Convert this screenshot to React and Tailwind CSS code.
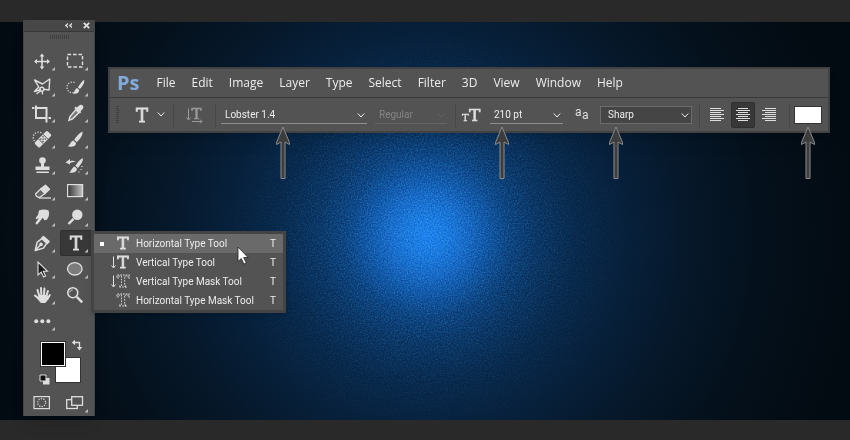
import { useState } from 'react'

const ink = '#dedede'
const slab = { fontFamily: '"DejaVu Serif", serif' }

const Corner = () => <path d="M28 19v3.4h-3.4z" fill="#bdbdbd" />

const icons = {
  move: (
    <g stroke={ink} strokeWidth="1.6" fill={ink}>
      <path d="M15 7.5v12M9 13.5h12" />
      <path d="M15 5.5l2.4 3h-4.8zM15 21.5l2.4-3h-4.8zM7 13.5l3-2.4v4.8zM23 13.5l-3-2.4v4.8z" stroke="none" />
    </g>
  ),
  marquee: <rect x="7.5" y="6.5" width="15" height="12.5" fill="none" stroke={ink} strokeWidth="1.4" strokeDasharray="3.6 1.9" />,
  lasso: (
    <g fill="none" stroke={ink} strokeWidth="1.4" strokeLinejoin="round">
      <path d="M14 15.5L7.5 17.5l4.3-4.5L7.5 6l8 4 7.2-5-.6 11-5.5-.8" />
      <circle cx="14.8" cy="15.2" r="1.9" />
      <path d="M13.5 16.8L9.5 20M15 17l.6 3.4" />
    </g>
  ),
  quickSelect: (
    <g fill={ink}>
      <path d="M14.5 8.6a5.3 5.3 0 1 0 0 9.6" fill="none" stroke={ink} strokeWidth="1.3" strokeDasharray="1.2 1.5" />
      <path d="M24.2 5.8c.6 3.5-1.8 6.6-4.3 9.2l-2-1.8c1.8-2.6 3.8-5.6 6.3-7.4zM17.2 14l2 2c-.2 3.2-3.2 4.4-6.2 3.6 1.6-1 1.4-4.4 4.2-5.6z" />
    </g>
  ),
  crop: (
    <g fill="none" stroke={ink} strokeWidth="2">
      <path d="M5 8h2.5M9 5.5V18h9.5M9.5 8h10v14.5M21.5 18h2.5" />
    </g>
  ),
  eyedropper: (
    <g>
      <path d="M19.2 5.6c1-1 2.6-1 3.5 0s.9 2.4 0 3.4l-2.2 2.2.9.9-1.5 1.5-5.6-5.6 1.5-1.5.9.9z" fill={ink} />
      <path d="M16 9.6l3 3-6.4 6.3-3.6 1.4 1-3.8z" fill="#777" stroke={ink} strokeWidth="1.5" />
    </g>
  ),
  healing: (
    <g>
      <path d="M7.5 15a5 5 0 1 1 8-7" fill="none" stroke={ink} strokeWidth="1.3" strokeDasharray="1.2 1.5" />
      <rect x="7" y="9.7" width="18" height="7" rx="1.5" fill={ink} transform="rotate(-45 16 13.2)" />
      <path d="M11.3 12.8l5 5M16 8.3l5 5" stroke="#555" strokeWidth="1" />
      <path d="M16 10.7v.1M13.8 13v.1M18.2 13v.1M16 15.3v.1M16 13v.1" stroke="#555" strokeWidth="1.6" strokeLinecap="round" />
    </g>
  ),
  brush: (
    <path
      d="M22.4 5.6c.8 3.8-2.6 7.6-5.6 10.6l-2.6-2.4c2.4-3.4 4.8-6.6 8.2-8.2zM13.4 14.4l2.6 2.5c0 3.8-4.6 4.4-8.6 3.4 2.6-.8 2.6-4.6 6-5.9z"
      fill={ink}
    />
  ),
  stamp: (
    <g fill={ink}>
      <circle cx="15.5" cy="8.6" r="3.3" />
      <path d="M14 10.5h3v4h5.5v3.6h-14v-3.6H14zM9.5 19.6h12.4v1.5H9.5z" />
    </g>
  ),
  history: (
    <g fill={ink}>
      <path d="M22.8 6c.6 3.6-2.4 7.2-5 10l-2.4-2.2c2-3 4.2-6.2 7.4-7.8zM14.6 14.4l2.4 2.3c-.1 3.4-4.2 4.6-8 3.8 2.4-.9 2.4-4.8 5.6-6.1z" />
      <path d="M5.5 10.6L10 7v2.2c2.4-.9 4.7-.2 6.2 1.2-2-.6-4-.4-6.2.6v1.6z" />
      <path d="M22 14v1M21 17v1M19 19.5v1" stroke={ink} strokeWidth="1.2" />
    </g>
  ),
  eraser: (
    <g stroke={ink} strokeWidth="1.3" strokeLinejoin="round">
      <path d="M18.5 7.3l4 4-4.5 4.2-4.5-4.4z" fill={ink} />
      <path d="M13.5 11.1L8.7 15.8c-.5 1.8 1.8 3.6 3.8 3.8l5.5-4.1z" fill="#666" />
      <path d="M12 20h12" fill="none" />
    </g>
  ),
  gradient: (
    <g>
      <defs>
        <linearGradient id="ramp">
          <stop offset="0" stopColor="#333" />
          <stop offset="1" stopColor="#c4c4c4" />
        </linearGradient>
      </defs>
      <rect x="7.6" y="6.6" width="15" height="12" fill="url(#ramp)" stroke={ink} strokeWidth="1.2" />
    </g>
  ),
  smudge: (
    <path
      d="M12 6.5c3-1.4 7-1.4 9.6 0 1 3.2.4 7.2-1.8 9.2l-2.4.6-1.6-2.6-5.2 6.4c-1 1-2.6-.1-1.9-1.3l3.3-5-2 1.2c-1 .3-1.7-.8-1-1.6l2-2.4z"
      fill={ink}
    />
  ),
  dodge: (
    <g>
      <circle cx="17.3" cy="10.7" r="5.2" fill={ink} />
      <path d="M13.5 14.8l-5 5.2" stroke={ink} strokeWidth="2.4" />
    </g>
  ),
  pen: (
    <g fill="none" stroke={ink} strokeWidth="1.5" strokeLinejoin="round">
      <path d="M16.5 6.6l5.6 5-2 1.8-5.5-5z" fill={ink} />
      <path d="M14.6 8.8l-4.4 3.4-2 8.3 8.2-2.4 3.4-4.8M8.6 20l5-5.2" />
      <circle cx="14" cy="14.3" r="1.1" fill={ink} />
    </g>
  ),
  type: (
    <text x="16" y="20" textAnchor="middle" fontSize="18" fill={ink} stroke={ink} strokeWidth="0.8" style={slab}>
      T
    </text>
  ),
  path: <path d="M11 6v13l3.2-2.8 2.4 4.8 2-1-2.3-4.7h4.2z" fill="#1c1c1c" stroke={ink} strokeWidth="1.1" />,
  ellipse: <ellipse cx="14.8" cy="12.8" rx="7.3" ry="6.2" fill="#7c7c7c" stroke={ink} strokeWidth="1.3" />,
  hand: (
    <g stroke={ink} strokeWidth="2" strokeLinecap="round" fill={ink}>
      <path d="M12.3 14L10.5 8M14.4 13.5L14 6M17 13.5l.4-7M19.4 14l1.5-5M20.5 17l2.3-4M12 17l-4-3.5" fill="none" />
      <path d="M11.8 13.5h8.4l.4 4-2.2 3h-4.6l-2.8-3.6z" strokeWidth="1" />
    </g>
  ),
  zoom: (
    <g fill="none" stroke={ink}>
      <circle cx="12.8" cy="10.7" r="5" strokeWidth="1.6" />
      <path d="M10 10.5c0-1.6 1.1-2.6 2.6-2.6" strokeWidth="1" />
      <path d="M16.8 14.8l5.4 5.6" strokeWidth="2.4" />
    </g>
  ),
  more: (
    <g fill={ink}>
      <circle cx="9.2" cy="13.2" r="2" />
      <circle cx="15.3" cy="13.2" r="2" />
      <circle cx="21.4" cy="13.2" r="2" />
    </g>
  ),
  quickMask: (
    <g fill="none" stroke={ink} strokeWidth="1.2">
      <rect x="7" y="6.6" width="15.4" height="12" />
      <circle cx="14.7" cy="12.6" r="4" strokeDasharray="1.2 1.3" />
    </g>
  ),
  screenMode: (
    <g fill="#535353" stroke={ink} strokeWidth="1.3">
      <rect x="6.7" y="9.7" width="10.6" height="8.8" />
      <rect x="11.7" y="6.7" width="10.8" height="8.6" />
    </g>
  ),
}

const tools = [
  ['move', 'Move'],
  ['marquee', 'Rectangular marquee'],
  ['lasso', 'Polygonal lasso'],
  ['quickSelect', 'Quick selection'],
  ['crop', 'Crop'],
  ['eyedropper', 'Eyedropper'],
  ['healing', 'Healing brush'],
  ['brush', 'Brush'],
  ['stamp', 'Clone stamp'],
  ['history', 'History brush'],
  ['eraser', 'Eraser'],
  ['gradient', 'Gradient'],
  ['smudge', 'Smudge'],
  ['dodge', 'Dodge'],
  ['pen', 'Pen'],
  ['type', 'Type'],
  ['path', 'Path selection'],
  ['ellipse', 'Ellipse'],
  ['hand', 'Hand'],
  ['zoom', 'Zoom'],
  ['more', 'Edit toolbar'],
]

const typeTools = [
  { label: 'Horizontal Type Tool' },
  { label: 'Vertical Type Tool', vertical: true },
  { label: 'Vertical Type Mask Tool', vertical: true, mask: true },
  { label: 'Horizontal Type Mask Tool', mask: true },
]

const menus = ['File', 'Edit', 'Image', 'Layer', 'Type', 'Select', 'Filter', '3D', 'View', 'Window', 'Help']

const ToolButton = ({ name, label, corner = true, active = false }) => (
  <button
    aria-label={label}
    className={`block h-[26px] w-full ${active ? 'rounded-xs border border-[#2f2f2f] bg-[#383838]' : ''}`}
  >
    <svg viewBox="0 0 33 26" className={`h-[26px] w-[33px] ${active ? '-m-px' : ''}`} aria-hidden="true">
      {icons[name]}
      {corner && <Corner />}
    </svg>
  </button>
)

const TypeFlyout = () => (
  <div
    role="menu"
    className="absolute top-px left-[31px] z-10 w-[195px] border-3 border-[#444444] bg-[#535353] font-[Roboto,sans-serif] text-[10px] shadow-md"
  >
    {typeTools.map(({ label, vertical, mask }, i) => (
      <button
        key={label}
        role="menuitem"
        className={`flex h-[19px] w-full items-center gap-1 pr-[7px] pl-1.5 ${i === 0 ? 'bg-[#6a6a6a]' : ''}`}
      >
        <span className={`size-1 ${i === 0 ? 'bg-white' : ''}`} />
        <svg viewBox="0 0 24 19" className="h-[19px] w-6 overflow-visible" fill="none" stroke={ink} aria-hidden="true">
          {vertical && <path d="M5.5 3.5v11M3.5 12.5l2 2.5 2-2.5" />}
          <text
            x="15"
            y="15"
            textAnchor="middle"
            fontSize="17"
            fontWeight={mask ? 700 : 400}
            fill={mask ? 'none' : ink}
            stroke={ink}
            strokeWidth={mask ? 0.9 : 0.8}
            strokeDasharray={mask ? '1.5 1.3' : undefined}
            style={slab}
          >
            T
          </text>
        </svg>
        <span>{label}</span>
        <span className="ml-auto">T</span>
      </button>
    ))}
    <svg viewBox="0 0 12 19" className="absolute top-3 left-[143px] h-[19px] w-3" aria-hidden="true">
      <path d="M1 1v14.5l3.3-3 2.6 5.6 2.4-1.1-2.6-5.5h4.4z" fill="#fff" stroke="#222" strokeWidth="0.8" />
    </svg>
  </div>
)

const Swatches = () => (
  <div className="relative h-14">
    <button aria-label="Background color" className="absolute top-[23px] left-7 size-[26px] border border-[#333] bg-white" />
    <button
      aria-label="Foreground color"
      className="absolute top-[7px] left-[13px] size-[26px] border border-[#333] bg-black inset-ring inset-ring-white"
    />
    <button aria-label="Swap colors" className="absolute top-[5px] left-11 size-3">
      <svg viewBox="0 0 12 12" className="size-3" fill={ink} aria-hidden="true">
        <path d="M3 3.5h5.5V9" fill="none" stroke={ink} strokeWidth="1.3" />
        <path d="M4 .8v5.4L.8 3.5zM5.8 8h5.4l-2.7 3.4z" />
      </svg>
    </button>
    <button aria-label="Default colors" className="absolute top-10 left-3 size-[11px]">
      <svg viewBox="0 0 11 11" className="size-[11px]" aria-hidden="true">
        <path d="M4 4h6.5v6.5H4z" fill={ink} />
        <path d="M1 1h6v6H1z" fill="#111" stroke={ink} />
      </svg>
    </button>
  </div>
)

const Toolbox = () => (
  <aside className="-mt-0.5 w-[72px] shrink-0 border-x border-[#454545] bg-[#535353] pr-px pl-[3px] shadow-lg">
    <div className="-mr-px -ml-[3px] flex h-3 items-center justify-end gap-2.5 border-b border-[#383838] bg-[#474747] pr-1">
      <button aria-label="Collapse">
        <svg viewBox="0 0 9 7" className="h-[7px] w-[9px]" fill={ink} aria-hidden="true">
          <path d="M4 .8v1.7L2.8 3.5 4 4.5v1.7L.8 3.5zM8 .8v1.7L6.8 3.5 8 4.5v1.7L4.8 3.5z" />
        </svg>
      </button>
      <button aria-label="Close">
        <svg viewBox="0 0 7 7" className="size-[7px]" stroke={ink} strokeWidth="1.8" aria-hidden="true">
          <path d="M.8.8l5.4 5.4M6.2.8L.8 6.2" />
        </svg>
      </button>
    </div>
    <div className="flex h-4 justify-center pt-[3px]">
      <svg viewBox="0 0 20 4" className="h-1 w-5" aria-hidden="true">
        <path d="M0 2h20" stroke="#404040" strokeWidth="4" strokeDasharray="1 1" />
      </svg>
    </div>
    <div className="grid grid-cols-2">
      {tools.map(([name, label]) => (
        <div key={name} className="relative">
          <ToolButton name={name} label={label} corner={name !== 'zoom'} active={name === 'type'} />
          {name === 'type' && <TypeFlyout />}
        </div>
      ))}
    </div>
    <Swatches />
    <div className="grid grid-cols-2">
      <ToolButton name="quickMask" label="Quick mask" corner={false} />
      <ToolButton name="screenMode" label="Screen mode" />
    </div>
  </aside>
)

// pointer hanging below the options bar
const Pointer = ({ className }) => (
  <svg viewBox="0 0 16 54" className={`pointer-events-none absolute top-5 z-10 h-[54px] w-4 ${className}`} aria-hidden="true">
    <path
      d="M8 1l6.5 15.5v2L10 16v36.5H6V16l-4.5 2.5v-2z"
      fill="#3d3d3d"
      stroke="#8b8b8b"
      strokeWidth="1"
      strokeLinejoin="round"
    />
  </svg>
)

const Chevron = ({ className = '' }) => (
  <svg viewBox="0 0 8 5" className={`pointer-events-none h-[5px] w-2 ${className}`} fill="none" stroke="currentColor" aria-hidden="true">
    <path d="M.8.5L4 4 7.2.5" />
  </svg>
)

const Divider = () => <span className="h-6 w-px bg-[#474747]" />

const OptionSelect = ({ label, options, boxed = false, className, pointer, disabled }) => {
  const [value, setValue] = useState(options[0])
  return (
    <div className={`relative h-[18px] shrink-0 ${disabled ? 'text-[#858585]' : ''} ${className}`}>
      <select
        aria-label={label}
        value={value}
        disabled={disabled}
        onChange={(e) => setValue(e.target.value)}
        className={`block h-full w-full appearance-none outline-none disabled:opacity-100 ${
          boxed
            ? 'border border-[#6c6c6c] bg-[#454545] px-[7px]'
            : `border-b px-1 ${disabled ? 'border-[#636363]' : 'border-[#8f8f8f]'}`
        }`}
      >
        {options.map((option) => (
          <option key={option}>{option}</option>
        ))}
      </select>
      <Chevron className={`absolute top-[7px] ${boxed ? 'right-[3px]' : 'right-0.5'} ${disabled ? 'opacity-30' : ''}`} />
      {pointer && <Pointer className={pointer} />}
    </div>
  )
}

const alignLines = {
  left: 'M0 1.5h11M0 3.5h14M0 5.5h11M0 7.5h14M0 9.5h11M0 11.5h14M0 13.5h11',
  center: 'M2 1.5h10M0 3.5h14M2 5.5h10M0 7.5h14M2 9.5h10M0 11.5h14M2 13.5h10',
  right: 'M3 1.5h11M0 3.5h14M3 5.5h11M0 7.5h14M3 9.5h11M0 11.5h14M3 13.5h11',
}

const AlignButtons = () => {
  const [align, setAlign] = useState('center')
  return (
    <div className="flex gap-0.5">
      {Object.entries(alignLines).map(([side, d]) => (
        <button
          key={side}
          aria-label={`Align ${side}`}
          onClick={() => setAlign(side)}
          className={`flex h-[26px] w-6 items-center justify-center rounded-xs border ${
            align === side ? 'border-[#2f2f2f] bg-[#383838]' : 'border-transparent'
          }`}
        >
          <svg viewBox="0 0 14 15" className="h-[15px] w-3.5" stroke={ink} aria-hidden="true">
            <path d={d} />
          </svg>
        </button>
      ))}
    </div>
  )
}

const OptionsBar = () => (
  <div className="flex h-[33px] items-center px-1.5 font-[Roboto,sans-serif] text-[10px]">
    <svg viewBox="0 0 3 18" className="h-[18px] w-[3px]" aria-hidden="true">
      <path d="M1.5 0v18" stroke="#3e3e3e" strokeWidth="3" strokeDasharray="1 1" />
    </svg>
    <button aria-label="Tool preset" className="ml-4 flex items-center gap-2">
      <svg viewBox="0 0 14 24" className="h-6 w-3.5 overflow-visible" aria-hidden="true">
        <text x="7" y="19" textAnchor="middle" fontSize="18" fill={ink} stroke={ink} strokeWidth="0.8" style={slab}>
          T
        </text>
      </svg>
      <Chevron />
    </button>
    <span className="ml-2 flex">
      <Divider />
    </span>
    <button aria-label="Text orientation" className="mx-3">
      <svg viewBox="0 0 17 18" className="h-[18px] w-[17px] overflow-visible" stroke="#999" fill="none" aria-hidden="true">
        <path d="M2.5 2.5v11M.5 11.5l2 2.5 2-2.5M6 15.5h10M14 13.5l2 2-2 2" />
        <text x="10.5" y="13" textAnchor="middle" fontSize="15" fill="#999" strokeWidth="0.5" style={slab}>
          T
        </text>
      </svg>
    </button>
    <Divider />
    <OptionSelect label="Font family" options={['Lobster 1.4']} className="ml-[5px] w-[146px]" pointer="left-[54px]" />
    <OptionSelect label="Font style" options={['Regular']} className="ml-2 w-[72px]" disabled />
    <span className="ml-2 flex">
      <Divider />
    </span>
    <svg viewBox="0 0 19 24" className="ml-1.5 h-6 w-[19px] overflow-visible" fill={ink} stroke={ink} aria-hidden="true">
      <text x="0" y="18" fontSize="10" strokeWidth="0.4" style={slab}>T</text>
      <text x="7" y="18" fontSize="17" strokeWidth="0.6" style={slab}>T</text>
    </svg>
    <OptionSelect label="Font size" options={['210 pt']} className="ml-[9px] w-[73px]" pointer="left-1" />
    <svg viewBox="0 0 14 24" className="ml-3 h-6 w-3.5 overflow-visible" fill={ink} aria-hidden="true">
      <text x="0" y="13" fontSize="12">a</text>
      <text x="7" y="16" fontSize="12">a</text>
    </svg>
    <OptionSelect label="Anti-aliasing" options={['Sharp']} className="ml-[11px] w-[92px]" pointer="left-2" boxed />
    <span className="mr-[5px] ml-[7px] flex">
      <Divider />
    </span>
    <AlignButtons />
    <span className="ml-2 flex">
      <Divider />
    </span>
    <div className="relative ml-1 h-[18px] w-7">
      <button aria-label="Text color" className="block h-full w-full border border-[#333] bg-white" />
      <Pointer className="left-1.5" />
    </div>
  </div>
)

const App = () => {
  return (
    <div className="flex min-h-screen flex-col bg-[#292929] pt-[22px] pb-5 font-['Open_Sans',sans-serif] text-[#ececec]">
      <main className="relative flex flex-1 items-start bg-[radial-gradient(circle_at_427px_213px,#2088ee_0px,#1d80e0_20px,#1a70ca_40px,#135dab_60px,#0f4a88_82px,#0c3a6b_110px,#092b4f_150px,#07203b_200px,#06182a_260px,#04101b_340px,#030b12_430px)] pr-5 pb-1 pl-[23px]">
        <svg
          className="pointer-events-none absolute inset-0 h-full w-full mask-[radial-gradient(circle_at_427px_213px,#000_90px,transparent_220px)] opacity-40 mix-blend-soft-light"
          aria-hidden="true"
        >
          <filter id="grain" colorInterpolationFilters="sRGB">
            <feTurbulence type="fractalNoise" baseFrequency="0.7" numOctaves="2" />
            <feColorMatrix values="1.8 0 0 0 -0.5  1.8 0 0 0 -0.5  1.8 0 0 0 -0.5  0 0 0 0 1" />
          </filter>
          <rect width="100%" height="100%" filter="url(#grain)" />
        </svg>
        <div className="relative flex w-full items-start gap-[13px]">
          <Toolbox />
          <section className="mt-[45px] min-w-0 flex-1 border-2 border-[#424242] bg-[#535353] shadow-lg">
            <nav className="flex h-[29px] items-center border-b border-[#3a3a3a] pl-[7px]">
              <span className="mr-[17px] text-[20px] leading-6 font-bold text-[#82aada]">Ps</span>
              <div className="flex gap-4 text-[12px]">
                {menus.map((menu) => (
                  <button key={menu}>{menu}</button>
                ))}
              </div>
            </nav>
            <OptionsBar />
          </section>
        </div>
      </main>
    </div>
  )
}

export default App
